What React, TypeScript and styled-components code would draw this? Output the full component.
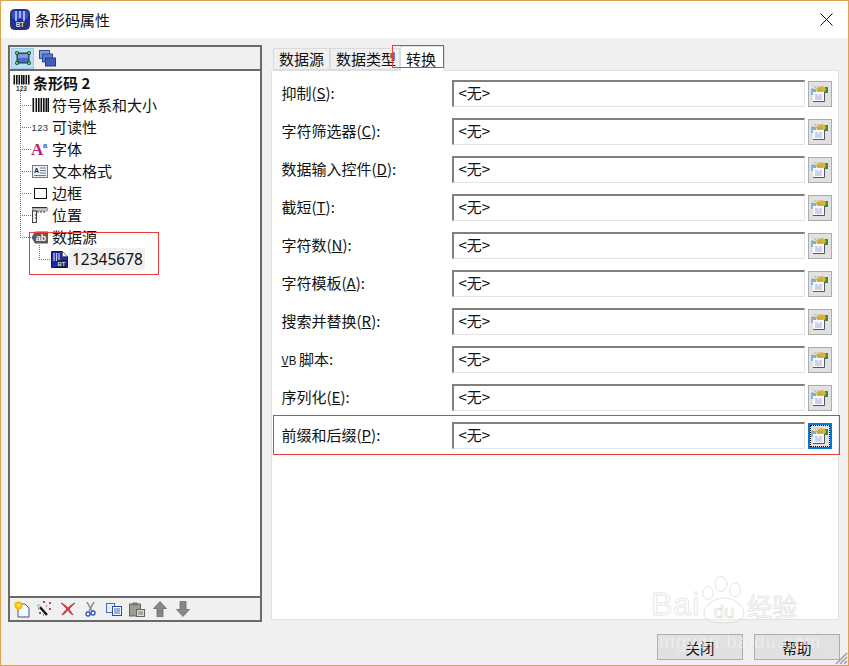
import styled, { createGlobalStyle } from 'styled-components'

const GlobalStyle = createGlobalStyle`
  html, body {
    margin: 0;
    padding: 0;
    background: #f0f0f0;
    overflow: hidden;
  }
  * {
    box-sizing: border-box;
  }
`

const Window = styled.div`
  position: relative;
  width: 849px;
  height: 666px;
  display: flex;
  flex-direction: column;
  background: #f0f0f0;
  border: 1px solid #dfa14f;
  font-family: 'Noto Sans CJK SC', 'Noto Sans', sans-serif;
  font-size: 15px;
  color: #111;
  overflow: hidden;
`

const TitleBar = styled.div`
  height: 37px;
  flex: none;
  background: #fff;
  display: flex;
  align-items: center;
  padding: 0 15px 0 9px;
  gap: 5px;
`

const TitleText = styled.span`
  flex: 1;
  line-height: 20px;
`

const Body = styled.div`
  flex: 1;
  display: flex;
  align-items: flex-start;
  padding: 7px 9px 0 7px;
  gap: 9px;
`

const LeftPanel = styled.div`
  width: 254px;
  height: 577px;
  display: flex;
  flex-direction: column;
  border: 2px solid #696969;
  background: #f0f0f0;
`

const ToolStrip = styled.div<{ $bottom?: boolean }>`
  flex: none;
  height: 24px;
  display: flex;
  align-items: center;
  padding-left: ${p => (p.$bottom ? '0' : '1px')};
  gap: ${p => (p.$bottom ? '0' : '2px')};
  ${p => (p.$bottom ? 'border-top: 2px solid #696969;' : 'border-bottom: 2px solid #696969;')}
`

const ToolToggle = styled.div<{ $active?: boolean }>`
  width: 23px;
  height: 21px;
  display: flex;
  align-items: center;
  justify-content: center;
  background: ${p => (p.$active ? '#bcdcf4' : 'transparent')};
  border: 1px solid ${p => (p.$active ? '#99ccf0' : 'transparent')};
`

const ToolIcon = styled.div`
  width: 23px;
  height: 20px;
  display: flex;
  align-items: center;
  justify-content: center;
`

const Tree = styled.div`
  flex: 1;
  background: #fff;
  padding: 1px 0 0 2px;
`

const TreeRow = styled.div<{ $indent?: number; $last?: boolean; $nested?: boolean }>`
  position: relative;
  height: 22px;
  display: flex;
  align-items: center;
  gap: 3px;
  padding-left: ${p => p.$indent ?? 0}px;

  ${p =>
    p.$indent
      ? `
    &::before {
      content: '';
      position: absolute;
      left: ${p.$nested ? 27 : 8}px;
      top: -3px;
      height: ${p.$last || p.$nested ? 15 : 25}px;
      border-left: 1px dotted #777;
    }
    &::after {
      content: '';
      position: absolute;
      left: ${p.$nested ? 27 : 8}px;
      top: 11px;
      width: 11px;
      border-top: 1px dotted #777;
    }
  `
      : ''}
`

const IconSlot = styled.span`
  flex: none;
  width: 18px;
  height: 18px;
  display: flex;
  align-items: center;
  justify-content: center;
`

const RootLabel = styled.span`
  font-weight: 700;
  line-height: 20px;
`

const NodeLabel = styled.span<{ $selected?: boolean }>`
  line-height: 20px;
  ${p =>
    p.$selected
      ? `
    background: #f0f0f0;
    padding: 1px 2px 1px 3px;
    margin-left: -2px;
    height: 22px;
    font-family: "Noto Sans", sans-serif;
    font-size: 15.5px;
  `
      : ''}
`

const RightColumn = styled.div`
  width: 568px;
  display: flex;
  flex-direction: column;
`

const TabBar = styled.div`
  height: 25px;
  flex: none;
  display: flex;
  align-items: flex-end;
  padding-left: 2px;
`

const Tab = styled.div<{ $active?: boolean; $w: number }>`
  width: ${p => p.$w}px;
  height: ${p => (p.$active ? 25 : 22)}px;
  display: flex;
  align-items: center;
  padding-left: 5px;
  background: ${p => (p.$active ? '#fff' : '#f0f0f0')};
  border: 1px solid #dadada;
  border-bottom: ${p => (p.$active ? '1px solid #fff' : '1px solid #dadada')};
  margin-bottom: ${p => (p.$active ? -1 : 0)}px;
  position: relative;
  white-space: nowrap;
  line-height: 20px;
`

const TabPanel = styled.div`
  height: 550px;
  background: #fff;
  border: 1.5px solid #e1e1e1;
  padding-top: 9px;
  display: flex;
  flex-direction: column;
  gap: 12px;
`

const FieldRow = styled.div`
  height: 26px;
  flex: none;
  display: flex;
  align-items: center;
  padding-left: 9.5px;
`

const FieldLabel = styled.label`
  width: 170px;
  flex: none;
  line-height: 20px;
  white-space: nowrap;
`

const Mnemonic = styled.span`
  text-decoration: underline;
`

const SmallCaps = styled.span`
  font-size: 12px;
`

const ScriptWord = styled.span`
  font-size: 15px;
`

const ValueBox = styled.div`
  width: 353px;
  height: 27px;
  flex: none;
  display: flex;
  align-items: center;
  padding: 0 0 1px 5px;
  border-style: solid;
  border-width: 2px 1.5px 1.5px 2px;
  border-color: #7f7f7f #e3e3e3 #e3e3e3 #7f7f7f;
  background: #fff;
  line-height: 20px;
`

const PickButton = styled.button<{ $focused?: boolean }>`
  width: 24px;
  height: 26px;
  flex: none;
  margin: 1px 0 0 3px;
  padding: 0;
  display: flex;
  align-items: center;
  justify-content: center;
  position: relative;
  background: #e1e1e1;
  border: ${p => (p.$focused ? '2px solid #0078d7' : '1px solid #adadad')};

  ${p =>
    p.$focused
      ? `
    &::after {
      content: '';
      position: absolute;
      inset: 0;
      border: 1px dotted #000;
    }
  `
      : ''}
`

const Footer = styled.div`
  flex: 1;
  display: flex;
  justify-content: flex-end;
  align-items: flex-start;
  gap: 11px;
  padding: 12px 8px 0 0;
`

const DialogButton = styled.button`
  width: 86px;
  height: 26px;
  padding: 0;
  background: #e1e1e1;
  border: 1px solid #adadad;
  font: inherit;
  font-size: 14.5px;
  color: #111;
`

const Grip = styled.svg`
  position: absolute;
  right: 0;
  bottom: 0;
`

const RedBox = styled.div<{ $x: number; $y: number; $w: number; $h: number }>`
  position: absolute;
  left: ${p => p.$x}px;
  top: ${p => p.$y}px;
  width: ${p => p.$w}px;
  height: ${p => p.$h}px;
  border: 1px solid #f03a3a;
  pointer-events: none;
`

const Watermark = styled.div`
  position: absolute;
  left: 650px;
  top: 574px;
  width: 170px;
  height: 86px;
  pointer-events: none;
  font-family: 'Liberation Sans', sans-serif;
`

const MarkLine = styled.div`
  display: flex;
  align-items: flex-end;
  height: 48px;
  color: rgba(255, 255, 255, 0.35);
  -webkit-text-stroke: 1px rgba(200, 200, 200, 0.45);
`

const MarkBai = styled.span`
  font-size: 32px;
  line-height: 38px;
  letter-spacing: 1px;
`

const MarkPaw = styled.svg`
  margin: 0 0 -1px 1px;
`

const MarkCn = styled.span`
  font-family: 'Noto Sans CJK SC', sans-serif;
  font-size: 25px;
  line-height: 36px;
`

const MarkUrl = styled.div`
  margin-top: 9px;
  padding-left: 3px;
  font-size: 18px;
  line-height: 20px;
  letter-spacing: 1.3px;
  white-space: nowrap;
  color: rgba(255, 255, 255, 0.55);
  -webkit-text-stroke: 0.3px rgba(200, 200, 200, 0.35);
`

const AppIcon = () => (
  <svg width="20" height="21" viewBox="0 0 20 21">
    <rect x="0.5" y="0.5" width="19" height="20" rx="4" fill="#1c2ea8" stroke="#333" />
    <rect x="2" y="2" width="16" height="8" rx="2" fill="#3a4fd0" />
    <path d="M6 2v11M10 2v7M14 2v11" stroke="#a8b4ee" strokeWidth="2" />
    <rect x="5" y="12" width="10" height="7" fill="#30304a" />
    <text x="10" y="18" textAnchor="middle" fontSize="6.5" fontWeight="700" fill="#ddd" fontFamily="Liberation Sans">BT</text>
  </svg>
)

const CloseIcon = () => (
  <svg width="13" height="13" viewBox="0 0 13 13">
    <path d="M0.5 0.5l12 12M12.5 0.5l-12 12" stroke="#111" strokeWidth="1" />
  </svg>
)

const ObjectIcon = () => (
  <svg width="16" height="15" viewBox="0 0 16 15">
    <rect x="2" y="2" width="12" height="10" fill="#4a6cc4" stroke="#111" strokeWidth="0.8" />
    <rect x="3" y="3" width="10" height="4" fill="#7f9be0" />
    {[[2, 2], [14, 2], [2, 12], [14, 12]].map(([x, y]) => (
      <circle key={`${x}-${y}`} cx={x} cy={y} r="1.7" fill="#3ce04a" stroke="#111" strokeWidth="0.6" />
    ))}
  </svg>
)

const LayersIcon = () => (
  <svg width="17" height="17" viewBox="0 0 17 17">
    <rect x="0.5" y="0.5" width="10" height="8" fill="#7f9be0" stroke="#2f4a90" />
    <rect x="3.5" y="4" width="10" height="8" fill="#5b7cd0" stroke="#2f4a90" />
    <rect x="6.5" y="8" width="10" height="8" fill="#3f5fb8" stroke="#203a80" />
  </svg>
)

const RootBarcodeIcon = () => (
  <svg width="17" height="16" viewBox="0 0 17 16">
    {[0.5, 3, 5.5, 8, 10, 12.5, 15].map(x => (
      <rect key={x} x={x} y={0} width={1.6} height={9.5} fill="#111" />
    ))}
    <text x="8.5" y="15.5" textAnchor="middle" fontSize="6.5" fontWeight="700" fill="#333" fontFamily="Liberation Sans">123</text>
  </svg>
)

const BarsIcon = () => (
  <svg width="17" height="14" viewBox="0 0 17 14">
    {[0.5, 3.5, 6, 8.5, 11, 13.5, 15.5].map(x => (
      <rect key={x} x={x} y={0} width={1.6} height={14} fill="#111" />
    ))}
  </svg>
)

const ReadableIcon = () => (
  <svg width="18" height="12" viewBox="0 0 18 12">
    <text x="9" y="10" textAnchor="middle" fontSize="9.5" fontWeight="400" fill="#333" letterSpacing="0.4" fontFamily="Liberation Sans">123</text>
  </svg>
)

const FontIcon = () => (
  <svg width="18" height="20" viewBox="0 0 18 20">
    <text x="0" y="16" fontSize="17" fontWeight="700" fill="#bb2277" fontFamily="Liberation Serif">A</text>
    <text x="12" y="9" fontSize="7.5" fontWeight="700" fill="#3355cc" fontFamily="Liberation Sans">a</text>
  </svg>
)

const TextFormatIcon = () => (
  <svg width="16" height="13" viewBox="0 0 16 13">
    <rect x="0.5" y="0.5" width="15" height="12" fill="#eef2f8" stroke="#6a7a92" />
    <text x="2" y="8" fontSize="7" fontWeight="700" fill="#222" fontFamily="Liberation Sans">A</text>
    <path d="M8 3h6M8 5.5h6M8 8h6M2 10.5h12" stroke="#6a7a92" />
  </svg>
)

const BorderIcon = () => (
  <svg width="13" height="11" viewBox="0 0 13 11">
    <rect x="0.5" y="0.5" width="12" height="10" fill="#fff" stroke="#111" />
  </svg>
)

const RulerIcon = () => (
  <svg width="16" height="16" viewBox="0 0 16 16">
    <path d="M0 0.5h15" stroke="#222" />
    <rect x="0.5" y="1" width="15" height="3" fill="#ccc" stroke="#555" strokeWidth="0.5" />
    <rect x="0.5" y="4" width="4" height="11.5" fill="#eee" stroke="#444" />
    <path d="M6 4v2M9 4v2M12 4v2M5 8H3M5 11H3" stroke="#333" />
  </svg>
)

const SourceIcon = () => (
  <svg width="18" height="13" viewBox="0 0 18 13">
    <path d="M4 0.5h13v12H4L0.5 6.5z" fill="#5a5a62" />
    <text x="10" y="9.5" textAnchor="middle" fontSize="9" fontWeight="700" fill="#fff" fontFamily="Liberation Sans">ab</text>
  </svg>
)

const DocBarcodeIcon = () => (
  <svg width="17" height="17" viewBox="0 0 17 17">
    <path d="M0.5 0.5h11l5 5v11H0.5z" fill="#1a2aa8" stroke="#0a1460" />
    <path d="M11.5 0.5v5h5z" fill="#fff" stroke="#555" strokeWidth="0.6" />
    <path d="M3 2v8M5.5 2v8M8 2v8" stroke="#c8d0f8" strokeWidth="1.2" />
    <rect x="6" y="9" width="9" height="7" fill="#24244a" />
    <text x="10.5" y="15" textAnchor="middle" fontSize="6" fontWeight="700" fill="#ddd" fontFamily="Liberation Sans">BT</text>
  </svg>
)

const NewIcon = () => (
  <svg width="16" height="17" viewBox="0 0 16 17">
    <path d="M4 3h7l4 4v9H4z" fill="#f4f8ff" stroke="#44597f" />
    <circle cx="4.5" cy="4.5" r="4" fill="#ffb400" />
    <circle cx="4.5" cy="4.5" r="2" fill="#ffe860" />
  </svg>
)

const WandIcon = () => (
  <svg width="15" height="16" viewBox="0 0 15 16">
    <path d="M1 4l9 10" stroke="#111" strokeWidth="2.4" />
    <path d="M1 4l2 2.2" stroke="#ddd" strokeWidth="2.4" />
    <path d="M6 1h2M7 0v2M12 2h2M13 1v2M2 12h2M3 11v2M12 8h2M13 7v2M9 5h1M1 8h1M6 14h1" stroke="#8a2030" strokeWidth="1" />
  </svg>
)

const DeleteIcon = () => (
  <svg width="16" height="14" viewBox="0 0 16 14">
    <path d="M1 1c3 1 5 3 7 5 2-2 4-4 7-5-2 2-4 4-6 6 1 2 3 4 4 6-2-1-4-3-5-5-2 2-3 4-6 5 1-2 3-4 5-6C5 5 3 3 1 1z" fill="#d8403a" stroke="#c03030" strokeWidth="0.8" />
  </svg>
)

const CutIcon = () => (
  <svg width="11" height="15" viewBox="0 0 11 15">
    <path d="M2 0l5 9M9 0L4 9" stroke="#7a8290" strokeWidth="1.4" />
    <circle cx="3" cy="12" r="2" fill="#fff" stroke="#3050c8" strokeWidth="1.4" />
    <circle cx="8" cy="11" r="2" fill="#fff" stroke="#3050c8" strokeWidth="1.4" />
  </svg>
)

const CopyIcon = () => (
  <svg width="16" height="13" viewBox="0 0 16 13">
    <rect x="0.5" y="0.5" width="8" height="9" fill="#e4eefc" stroke="#4a6cc4" />
    <rect x="6.5" y="3.5" width="9" height="9" fill="#f4f8ff" stroke="#2f4a90" />
    <path d="M8 6h6M8 8h6M8 10h6" stroke="#3f66c0" />
  </svg>
)

const PasteIcon = () => (
  <svg width="16" height="15" viewBox="0 0 16 15">
    <rect x="0.5" y="2" width="11" height="12" fill="#a09c94" stroke="#66635c" />
    <rect x="3.5" y="0.5" width="5" height="3" fill="#77746c" />
    <rect x="7.5" y="7.5" width="8" height="7" fill="#dcdcdc" stroke="#66635c" />
    <path d="M9 10h5M9 12h5" stroke="#777" />
  </svg>
)

const ArrowIcon = ({ down }: { down?: boolean }) => (
  <svg width="14" height="16" viewBox="0 0 14 16" style={down ? { transform: 'scaleY(-1)' } : undefined}>
    <path d="M7 0.5L13.5 7.5H10V15.5H4V7.5H0.5z" fill="#85878c" stroke="#6a6c70" strokeWidth="0.8" />
  </svg>
)

const PickIcon = () => (
  <svg width="17" height="16" viewBox="0 0 17 16">
    <rect x="0" y="3" width="5" height="6" fill="#86b4dc" />
    <path d="M12 1h5v6h-3z" fill="#3f8a3c" />
    <path d="M5 3l5-3 4 1 1 3-4 3H7z" fill="#d9b53c" />
    <path d="M3 0l8 8M6 0l5 5M1 2l7 7" stroke="#7a6a30" strokeWidth="0.7" strokeDasharray="1 1" />
    <rect x="2" y="6" width="11" height="9" fill="#fafafa" />
    <path d="M13.5 6v9.5H2" fill="none" stroke="#55565c" />
    <path d="M4 9h3M8 9h3M4 11h7M4 13h7" stroke="#a0a8e0" />
  </svg>
)

const Paw = () => (
  <MarkPaw width="46" height="48" viewBox="0 0 46 48">
    <g fill="rgba(255,255,255,.35)" stroke="rgba(200,200,200,.5)" strokeWidth="1">
      <ellipse cx="20" cy="8" rx="6" ry="7.5" />
      <ellipse cx="34" cy="14" rx="5.5" ry="7" />
      <ellipse cx="7" cy="17" rx="5" ry="6.5" />
      <path d="M23 22c8 0 20 6 20 15 0 7-8 10-20 10S3 44 3 37c0-9 12-15 20-15z" />
    </g>
    <text x="23" y="42" textAnchor="middle" fontSize="19" fill="rgba(255,255,255,.5)" stroke="rgba(200,200,200,.6)" strokeWidth="0.7" fontFamily="Liberation Sans">du</text>
  </MarkPaw>
)

const treeItems = [
  { label: '符号体系和大小', icon: <BarsIcon /> },
  { label: '可读性', icon: <ReadableIcon /> },
  { label: '字体', icon: <FontIcon /> },
  { label: '文本格式', icon: <TextFormatIcon /> },
  { label: '边框', icon: <BorderIcon /> },
  { label: '位置', icon: <RulerIcon /> },
  { label: '数据源', icon: <SourceIcon />, last: true },
]

const fields = [
  { name: '抑制', key: 'S' },
  { name: '字符筛选器', key: 'C' },
  { name: '数据输入控件', key: 'D' },
  { name: '截短', key: 'T' },
  { name: '字符数', key: 'N' },
  { name: '字符模板', key: 'A' },
  { name: '搜索并替换', key: 'R' },
  { name: 'VB', key: '' },
  { name: '序列化', key: 'E' },
  { name: '前缀和后缀', key: 'P' },
]

const bottomTools = [
  <NewIcon />,
  <WandIcon />,
  <DeleteIcon />,
  <CutIcon />,
  <CopyIcon />,
  <PasteIcon />,
  <ArrowIcon />,
  <ArrowIcon down />,
]

const App = () => (
  <>
    <GlobalStyle />
    <Window>
      <TitleBar>
        <AppIcon />
        <TitleText>条形码属性</TitleText>
        <CloseIcon />
      </TitleBar>
      <Body>
        <LeftPanel>
          <ToolStrip>
            <ToolToggle $active>
              <ObjectIcon />
            </ToolToggle>
            <ToolToggle>
              <LayersIcon />
            </ToolToggle>
          </ToolStrip>
          <Tree>
            <TreeRow>
              <IconSlot>
                <RootBarcodeIcon />
              </IconSlot>
              <RootLabel>条形码 2</RootLabel>
            </TreeRow>
            {treeItems.map(item => (
              <TreeRow key={item.label} $indent={19} $last={item.last}>
                <IconSlot>{item.icon}</IconSlot>
                <NodeLabel>{item.label}</NodeLabel>
              </TreeRow>
            ))}
            <TreeRow $indent={38} $nested>
              <IconSlot>
                <DocBarcodeIcon />
              </IconSlot>
              <NodeLabel $selected>12345678</NodeLabel>
            </TreeRow>
          </Tree>
          <ToolStrip $bottom>
            {bottomTools.map((tool, i) => (
              <ToolIcon key={i}>{tool}</ToolIcon>
            ))}
          </ToolStrip>
        </LeftPanel>
        <RightColumn>
          <TabBar>
            <Tab $w={57}>数据源</Tab>
            <Tab $w={70}>数据类型</Tab>
            <Tab $w={45} $active>转换</Tab>
          </TabBar>
          <TabPanel>
            {fields.map((field, i) => (
              <FieldRow key={field.name}>
                <FieldLabel>
                  {field.key ? (
                    <>
                      {field.name}(<Mnemonic>{field.key}</Mnemonic>):
                    </>
                  ) : (
                    <SmallCaps>
                      <Mnemonic>V</Mnemonic>B <ScriptWord>脚本:</ScriptWord>
                    </SmallCaps>
                  )}
                </FieldLabel>
                <ValueBox>&lt;无&gt;</ValueBox>
                <PickButton $focused={i === fields.length - 1}>
                  <PickIcon />
                </PickButton>
              </FieldRow>
            ))}
          </TabPanel>
        </RightColumn>
      </Body>
      <Footer>
        <DialogButton>关闭</DialogButton>
        <DialogButton>帮助</DialogButton>
      </Footer>
      <Grip width="14" height="14" viewBox="0 0 14 14">
        <path d="M13 2L2 13M13 6L6 13M13 10L10 13" stroke="#9a9a9a" strokeWidth="1.4" />
      </Grip>
      <RedBox $x={28} $y={231} $w={130} $h={43} />
      <RedBox $x={391} $y={44} $w={52} $h={23} />
      <RedBox $x={272} $y={414} $w={567} $h={40} />
      <Watermark>
        <MarkLine>
          <MarkBai>Bai</MarkBai>
          <Paw />
          <MarkCn>经验</MarkCn>
        </MarkLine>
        <MarkUrl>jingyan.baidu.com</MarkUrl>
      </Watermark>
    </Window>
  </>
)

export default App
